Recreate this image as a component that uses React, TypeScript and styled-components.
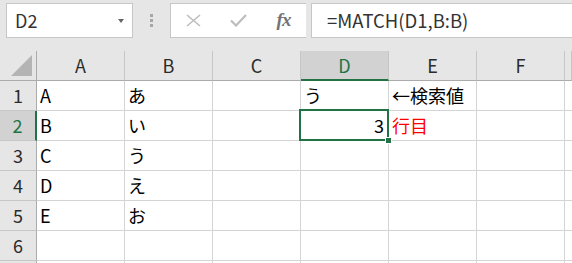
import styled, { createGlobalStyle } from "styled-components"

const GlobalStyle = createGlobalStyle`
  html, body {
    margin: 0;
    padding: 0;
    background: #ffffff;
  }
  body {
    font-family: "Noto Sans CJK JP", "Noto Sans", sans-serif;
    overflow: hidden;
  }
`

const GREEN = "#217346"

type CellData = {
  text: string
  align?: "left" | "right"
  color?: string
}

// the last column and row are only a sliver at the window's edge
const COLUMNS = ["A", "B", "C", "D", "E", "F", ""]
const ROWS = [1, 2, 3, 4, 5, 6, 7]
const VISIBLE_ROWS = 6
const ACTIVE = { col: "D", row: 2 }

const cells: Record<string, CellData> = {
  A1: { text: "A" },
  A2: { text: "B" },
  A3: { text: "C" },
  A4: { text: "D" },
  A5: { text: "E" },
  B1: { text: "あ" },
  B2: { text: "い" },
  B3: { text: "う" },
  B4: { text: "え" },
  B5: { text: "お" },
  D1: { text: "う" },
  D2: { text: "3", align: "right" },
  E1: { text: "←検索値" },
  E2: { text: "行目", color: "#ff0000" },
}

const Wrapper = styled.div`
  width: 572px;
  height: 263px;
  overflow: hidden;
  background: #ffffff;
`

const FormulaBar = styled.div`
  display: flex;
  align-items: flex-start;
  height: 51px;
  padding-top: 3px;
  box-sizing: border-box;
  background: #e6e6e6;
  overflow: hidden;
`

const NameBox = styled.div`
  display: flex;
  align-items: center;
  justify-content: space-between;
  flex: none;
  width: 127px;
  height: 35px;
  margin-left: 6px;
  padding: 0 8px 2px 8px;
  box-sizing: border-box;
  background: #ffffff;
  border: 1px solid #c6c6c6;
  font-size: 18px;
  color: #333333;
`

const Caret = styled.span`
  width: 0;
  height: 0;
  margin-top: 2px;
  border-left: 3.5px solid transparent;
  border-right: 3.5px solid transparent;
  border-top: 4px solid #666666;
`

const Grip = styled.div`
  display: flex;
  flex-direction: column;
  gap: 2px;
  flex: none;
  margin: 11px 0 0 17px;
`

const GripDot = styled.i`
  display: block;
  width: 3px;
  height: 3px;
  background: #a6a6a6;
`

const Buttons = styled.div`
  display: flex;
  flex: none;
  width: 136px;
  height: 35px;
  margin-left: 17px;
  box-sizing: border-box;
  background: #ffffff;
  border: 1px solid #c6c6c6;
  border-right: none;
`

const ButtonSlot = styled.div`
  display: flex;
  align-items: center;
  justify-content: center;
  width: 45px;
  padding-bottom: 1px;
`

const Fx = styled.span`
  font-family: "Liberation Serif", "DejaVu Serif", serif;
  font-style: italic;
  font-weight: bold;
  font-size: 19px;
  color: #737373;
  letter-spacing: -1px;
`

const FormulaInput = styled.div`
  flex: 1 0 auto;
  height: 35px;
  margin-left: 5px;
  padding: 0 0 2px 15px;
  box-sizing: border-box;
  display: flex;
  align-items: center;
  background: #ffffff;
  border: 1px solid #c6c6c6;
  border-right: none;
  font-size: 18.5px;
  color: #333333;
  white-space: nowrap;
`

const Sheet = styled.div`
  display: grid;
  grid-template-columns: 37px repeat(6, 88px) 7px;
  grid-auto-rows: 30px;
  width: max-content;
  font-size: 18px;
`

const Corner = styled.div`
  display: flex;
  align-items: flex-end;
  justify-content: flex-end;
  padding: 0 3px 3px 0;
  box-sizing: border-box;
  background: #e6e6e6;
  border-right: 1px solid #ababab;
  border-bottom: 1px solid #ababab;
`

const ColHeader = styled.div<{ $active?: boolean }>`
  display: flex;
  align-items: center;
  justify-content: center;
  box-sizing: border-box;
  padding-bottom: 1px;
  background: ${({ $active }) => ($active ? "#d2d2d2" : "#e6e6e6")};
  color: ${({ $active }) => ($active ? GREEN : "#2b2b2b")};
  border-right: 1px solid #c6c6c6;
  border-bottom: ${({ $active }) =>
    $active ? `2px solid ${GREEN}` : "1px solid #ababab"};
`

const RowHeader = styled.div<{ $active?: boolean }>`
  display: flex;
  align-items: center;
  justify-content: center;
  box-sizing: border-box;
  padding-bottom: 1px;
  background: ${({ $active }) => ($active ? "#d2d2d2" : "#e6e6e6")};
  color: ${({ $active }) => ($active ? GREEN : "#2b2b2b")};
  border-right: ${({ $active }) =>
    $active ? `2px solid ${GREEN}` : "1px solid #ababab"};
  border-bottom: 1px solid #c6c6c6;
`

const Cell = styled.div<{
  $align?: "left" | "right"
  $color?: string
  $active?: boolean
}>`
  position: relative;
  display: flex;
  align-items: center;
  justify-content: ${({ $align }) =>
    $align === "right" ? "flex-end" : "flex-start"};
  padding: 0 4px 1px 3px;
  box-sizing: border-box;
  border-right: 1px solid #d4d4d4;
  border-bottom: 1px solid #d4d4d4;
  color: ${({ $color }) => $color || "#000000"};
  white-space: nowrap;
  z-index: ${({ $active }) => ($active ? 2 : "auto")};

  ${({ $active }) =>
    $active &&
    `
    &::after {
      content: "";
      position: absolute;
      top: -2px;
      left: -2px;
      right: -1px;
      bottom: -1px;
      border: 2px solid ${GREEN};
      pointer-events: none;
    }
    &::before {
      content: "";
      position: absolute;
      right: -4px;
      bottom: -4px;
      width: 5px;
      height: 5px;
      background: ${GREEN};
      border: 1px solid #ffffff;
      z-index: 3;
    }
  `}
`

const App = () => {
  return (
    <Wrapper>
      <GlobalStyle />
      <FormulaBar>
        <NameBox>
          <span>D2</span>
          <Caret />
        </NameBox>
        <Grip>
          <GripDot />
          <GripDot />
          <GripDot />
        </Grip>
        <Buttons>
          <ButtonSlot>
            <svg width="15" height="13" viewBox="0 0 15 13">
              <path
                d="M1 1 L14 12 M14 1 L1 12"
                stroke="#bdbdbd"
                strokeWidth="1.6"
                fill="none"
              />
            </svg>
          </ButtonSlot>
          <ButtonSlot>
            <svg width="17" height="13" viewBox="0 0 17 13">
              <path
                d="M1 6.5 L6 11.5 L16 1"
                stroke="#bdbdbd"
                strokeWidth="2.2"
                fill="none"
              />
            </svg>
          </ButtonSlot>
          <ButtonSlot>
            <Fx>fx</Fx>
          </ButtonSlot>
        </Buttons>
        <FormulaInput>=MATCH(D1,B:B)</FormulaInput>
      </FormulaBar>

      <Sheet>
        <Corner>
          <svg width="22" height="22" viewBox="0 0 22 22">
            <polygon points="21,0 21,21 0,21" fill="#b4b4b4" />
          </svg>
        </Corner>
        {COLUMNS.map((col, i) => (
          <ColHeader key={`c${i}`} $active={col === ACTIVE.col}>
            {col}
          </ColHeader>
        ))}
        {ROWS.map((row) => [
          <RowHeader key={`h${row}`} $active={row === ACTIVE.row}>
            {row <= VISIBLE_ROWS ? row : ""}
          </RowHeader>,
          ...COLUMNS.map((col, i) => {
            const cell = col ? cells[`${col}${row}`] : undefined
            const isActive = col === ACTIVE.col && row === ACTIVE.row
            return (
              <Cell
                key={`${i}-${row}`}
                $align={cell?.align}
                $color={cell?.color}
                $active={isActive}
              >
                {cell?.text}
              </Cell>
            )
          }),
        ])}
      </Sheet>
    </Wrapper>
  )
}

export default App
